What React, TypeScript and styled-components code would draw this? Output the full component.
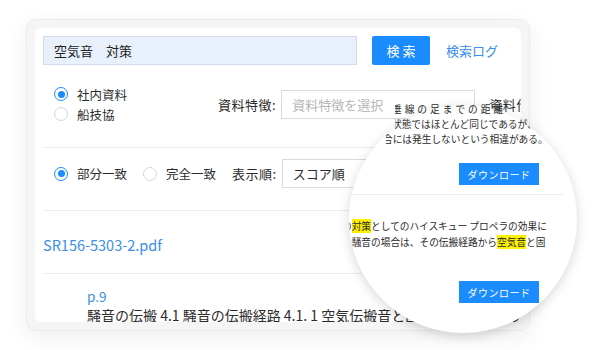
import React from 'react';
import styled, { createGlobalStyle } from 'styled-components';

const GlobalStyle = createGlobalStyle`
  html, body {
    margin: 0;
    padding: 0;
    background: #fff;
  }
  body {
    font-family: "Noto Sans CJK JP", "Noto Sans", sans-serif;
    color: #2b2b2b;
  }
  * {
    box-sizing: border-box;
  }
`;

const Stage = styled.div`
  position: relative;
  width: 600px;
  height: 350px;
  padding: 19px 0 0 26px;
  overflow: hidden;
  background: #fff;
`;

const Frame = styled.div`
  width: 504px;
  height: 312px;
  padding: 8px;
  border: 1px solid #ebebeb;
  border-radius: 10px;
  background: #f5f5f5;
  box-shadow: 0 6px 22px rgba(0, 0, 0, 0.07);
`;

const Panel = styled.div`
  height: 100%;
  padding: 8px 0 0 8px;
  border-radius: 6px;
  background: #fff;
  overflow: hidden;
`;

const SearchRow = styled.div`
  display: flex;
  align-items: center;
  height: 29px;
`;

const SearchInput = styled.div`
  display: flex;
  align-items: center;
  flex-shrink: 0;
  width: 314px;
  height: 29px;
  padding-left: 10px;
  border: 1px solid #d2dbe8;
  background: #e8f0fc;
  font-size: 13px;
  color: #222;
  white-space: pre;
`;

const SearchButton = styled.button`
  flex-shrink: 0;
  margin-left: 15px;
  width: 58px;
  height: 29px;
  border: none;
  border-radius: 2px;
  background: #1a8cff;
  color: #fff;
  font-family: inherit;
  font-size: 13px;
  letter-spacing: 3px;
  padding: 0 0 0 3px;
`;

const LogLink = styled.a`
  flex-shrink: 0;
  margin-left: 16px;
  color: #3a8ee6;
  font-size: 13px;
  text-decoration: none;
`;

const FilterRow = styled.div`
  display: flex;
  align-items: center;
  margin-top: 19px;
  white-space: nowrap;

  & > * {
    flex-shrink: 0;
  }
`;

const RadioColumn = styled.div`
  display: flex;
  flex-direction: column;
  width: 175px;
  padding-left: 11px;
`;

const RadioItem = styled.label<{ $gap?: number }>`
  display: flex;
  align-items: center;
  flex-shrink: 0;
  height: 20px;
  margin-right: ${(p) => p.$gap ?? 0}px;
  font-size: 12.5px;
  color: #2b2b2b;
`;

const RadioDot = styled.span<{ $checked?: boolean }>`
  position: relative;
  width: 14px;
  height: 14px;
  margin-right: 9px;
  border-radius: 50%;
  border: 1px solid ${(p) => (p.$checked ? '#1a8cff' : '#d6d6d6')};
  background: #fff;

  &::after {
    content: '';
    display: ${(p) => (p.$checked ? 'block' : 'none')};
    position: absolute;
    left: 2.5px;
    top: 2.5px;
    width: 7px;
    height: 7px;
    border-radius: 50%;
    background: #1a8cff;
  }
`;

const FieldLabel = styled.span<{ $ml?: number }>`
  flex-shrink: 0;
  margin-left: ${(p) => p.$ml ?? 0}px;
  font-size: 13px;
  letter-spacing: 0.5px;
  color: #2b2b2b;
`;

const SelectBox = styled.div<{ $placeholder?: boolean }>`
  display: flex;
  align-items: center;
  flex-shrink: 0;
  margin-left: 5px;
  width: 194px;
  height: 29px;
  padding-left: 10px;
  border: 1px solid #dadada;
  background: #fff;
  font-size: 13px;
  color: ${(p) => (p.$placeholder ? '#b8b8b8' : '#2b2b2b')};
`;

const Divider = styled.div<{ $mt: number }>`
  height: 1px;
  margin: ${(p) => p.$mt}px 8px 0 0;
  background: #ececec;
`;

const OptionRow = styled.div`
  display: flex;
  align-items: center;
  height: 29px;
  margin-top: 11px;
  padding-left: 11px;
  white-space: nowrap;
`;

const FileLink = styled.a`
  display: block;
  margin-top: 24px;
  line-height: 20px;
  color: #3a8ee6;
  font-size: 14.5px;
  text-decoration: none;
`;

const Hit = styled.div`
  margin-top: 13px;
  padding-left: 44px;
  white-space: nowrap;
`;

const PageNo = styled.div`
  line-height: 18px;
  font-size: 13.5px;
  color: #3a8ee6;
`;

const HitText = styled.div`
  line-height: 20px;
  font-size: 14px;
  color: #2b2b2b;
`;

/* magnifier lens over the result list */
const Lens = styled.div`
  position: absolute;
  left: 349px;
  top: 105px;
  width: 228px;
  height: 228px;
  border-radius: 50%;
  background: #fff;
  box-shadow: 0 3px 12px rgba(0, 0, 0, 0.16);
  overflow: hidden;
  padding-top: 58px;
`;

const LensButtonRow = styled.div<{ $mt?: number }>`
  display: flex;
  justify-content: flex-end;
  margin-top: ${(p) => p.$mt ?? 0}px;
  padding-right: 38px;
`;

const DownloadButton = styled.button`
  width: 80px;
  height: 22px;
  border: none;
  background: #1a8cff;
  color: #fff;
  font-family: inherit;
  font-size: 10px;
  letter-spacing: 0.5px;
  padding: 0;
`;

const LensDivider = styled.div`
  width: 213px;
  height: 1px;
  margin: 9px 0 0 1px;
  background: #ededed;
`;

const Snippet = styled.div`
  margin: 23px 0 0 -7px;
  font-size: 9.7px;
  line-height: 16px;
  color: #2b2b2b;
  white-space: nowrap;
`;

const Mark = styled.span`
  background: #fff200;
`;

const Spill = styled.div`
  position: absolute;
  left: 378px;
  top: 102px;
  font-size: 9.7px;
  line-height: 15px;
  color: #2b2b2b;
  white-space: nowrap;
  z-index: 2;
`;

const SpillLine = styled.div<{ $indent: number; $spacing?: number }>`
  margin-left: ${(p) => p.$indent}px;
  overflow: hidden;
  text-indent: -3px;
  letter-spacing: ${(p) => p.$spacing ?? 0}px;
`;

const App: React.FC = () => {
  return (
    <>
      <GlobalStyle />
      <Stage>
        <Frame>
          <Panel>
            <SearchRow>
              <SearchInput>空気音　対策</SearchInput>
              <SearchButton>検索</SearchButton>
              <LogLink href="#">検索ログ</LogLink>
            </SearchRow>

            <FilterRow>
              <RadioColumn>
                <RadioItem>
                  <RadioDot $checked />
                  社内資料
                </RadioItem>
                <RadioItem>
                  <RadioDot />
                  船技協
                </RadioItem>
              </RadioColumn>
              <FieldLabel>資料特徴:</FieldLabel>
              <SelectBox $placeholder>資料特徴を選択</SelectBox>
              <FieldLabel $ml={14}>資料作成日:</FieldLabel>
            </FilterRow>

            <Divider $mt={23} />

            <OptionRow>
              <RadioItem $gap={16}>
                <RadioDot $checked />
                部分一致
              </RadioItem>
              <RadioItem $gap={16}>
                <RadioDot />
                完全一致
              </RadioItem>
              <FieldLabel>表示順:</FieldLabel>
              <SelectBox>スコア順</SelectBox>
            </OptionRow>

            <Divider $mt={22} />

            <FileLink href="#">SR156-5303-2.pdf</FileLink>

            <Divider $mt={18} />

            <Hit>
              <PageNo>p.9</PageNo>
              <HitText>
                騒音の伝搬 4.1 騒音の伝搬経路 4.1. 1 空気伝搬音と固体伝搬音 騒音の伝搬経路は
              </HitText>
            </Hit>
          </Panel>
        </Frame>

        <Lens>
          <LensButtonRow>
            <DownloadButton>ダウンロード</DownloadButton>
          </LensButtonRow>
          <LensDivider />
          <Snippet>
            の<Mark>対策</Mark>としてのハイスキュー プロペラの効果に
            <br />
            の騒音の場合は、その伝搬経路から<Mark>空気音</Mark>と固
          </Snippet>
          <LensButtonRow $mt={31}>
            <DownloadButton>ダウンロード</DownloadButton>
          </LensButtonRow>
        </Lens>

        <Spill>
          <SpillLine $indent={17} $spacing={3}>垂線の足までの距離</SpillLine>
          <SpillLine $indent={17}>状態ではほとんど同じであるが、</SpillLine>
          <SpillLine $indent={8}>合には発生しないという相違がある。</SpillLine>
        </Spill>
      </Stage>
    </>
  );
};

export default App;
